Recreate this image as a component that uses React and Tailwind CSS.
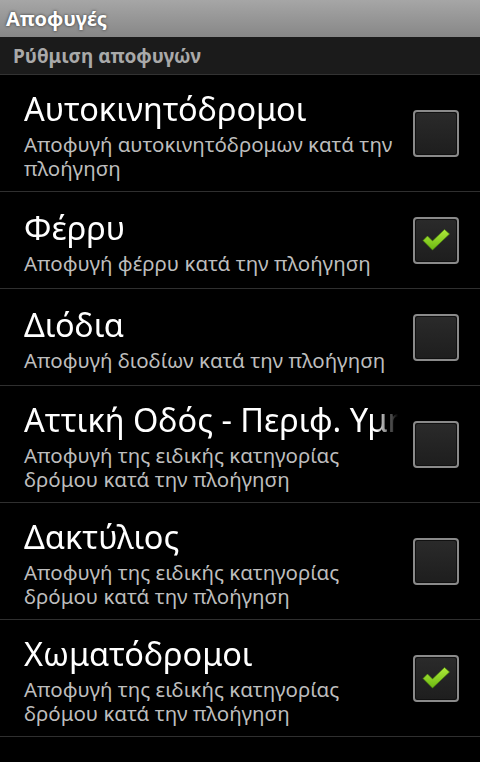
import React from "react";

const items = [
  { title: "Αυτοκινητόδρομοι", summary: "Αποφυγή αυτοκινητόδρομων κατά την πλοήγηση", checked: false, two: true },
  { title: "Φέρρυ", summary: "Αποφυγή φέρρυ κατά την πλοήγηση", checked: true, two: false },
  { title: "Διόδια", summary: "Αποφυγή διοδίων κατά την πλοήγηση", checked: false, two: false },
  { title: "Αττική Οδός - Περιφ. Υμηττού", summary: "Αποφυγή της ειδικής κατηγορίας δρόμου κατά την πλοήγηση", checked: false, two: true },
  { title: "Δακτύλιος", summary: "Αποφυγή της ειδικής κατηγορίας δρόμου κατά την πλοήγηση", checked: false, two: true },
  { title: "Χωματόδρομοι", summary: "Αποφυγή της ειδικής κατηγορίας δρόμου κατά την πλοήγηση", checked: true, two: true },
];

function Check({ checked }) {
  return (
    <div className="w-[46px] h-[47px] rounded-[4px] border-2 border-[#8a8a8a] bg-[#111] p-px shrink-0">
      <div className="w-full h-full rounded-[2px] bg-gradient-to-b from-[#2a2a2a] to-[#1e1e1e] flex items-center justify-center">
        {checked && (
          <svg width="30" height="24" viewBox="0 0 30 24" className="ml-[2px]">
            <defs>
              <linearGradient id="g" x1="0" y1="0" x2="0" y2="1">
                <stop offset="0" stopColor="#aeea3a" />
                <stop offset="1" stopColor="#6cb812" />
              </linearGradient>
            </defs>
            <path d="M1 12.5 L5.5 8 L10.5 13 L22.5 1.5 L27.5 6 L10.5 22 Z" fill="url(#g)" stroke="#4d8a0a" strokeWidth="0.6" strokeLinejoin="round" />
          </svg>
        )}
      </div>
    </div>
  );
}

export default function App() {
  return (
    <div className="w-[480px] h-[762px] bg-black overflow-hidden" style={{ fontFamily: '"Noto Sans", "Open Sans", sans-serif' }}>
      <div className="h-[37px] bg-gradient-to-b from-[#a6a6a6] to-[#878787] flex items-center pl-[6px]">
        <span className="text-white font-bold text-[20px] leading-[28px] [text-shadow:0_0_3px_rgba(0,0,0,0.7)]">Αποφυγές</span>
      </div>
      <div className="h-[38px] bg-[#1b1b1b] flex items-center pl-[13px] border-b border-[#333]">
        <span className="text-[#a9a9a9] font-bold text-[19px] leading-[26px]">Ρύθμιση αποφυγών</span>
      </div>
      {items.map((it, i) => (
        <div key={i} className={`flex items-center border-b border-[#2f2f2f] ${it.two ? "h-[117px]" : "h-[97px]"}`}>
          <div className="flex-1 min-w-0 pl-[24px] pr-[15px]">
            <div className="text-white text-[32.5px] leading-[44px] whitespace-nowrap overflow-hidden [mask-image:linear-gradient(to_right,black_94%,transparent)]">
              {it.title}
            </div>
            <div className="text-[#bdbdbd] text-[20.5px] leading-[24px] mt-[1px]">{it.summary}</div>
          </div>
          <div className="shrink-0 mr-[21px]">
            <Check checked={it.checked} />
          </div>
        </div>
      ))}
    </div>
  );
}
